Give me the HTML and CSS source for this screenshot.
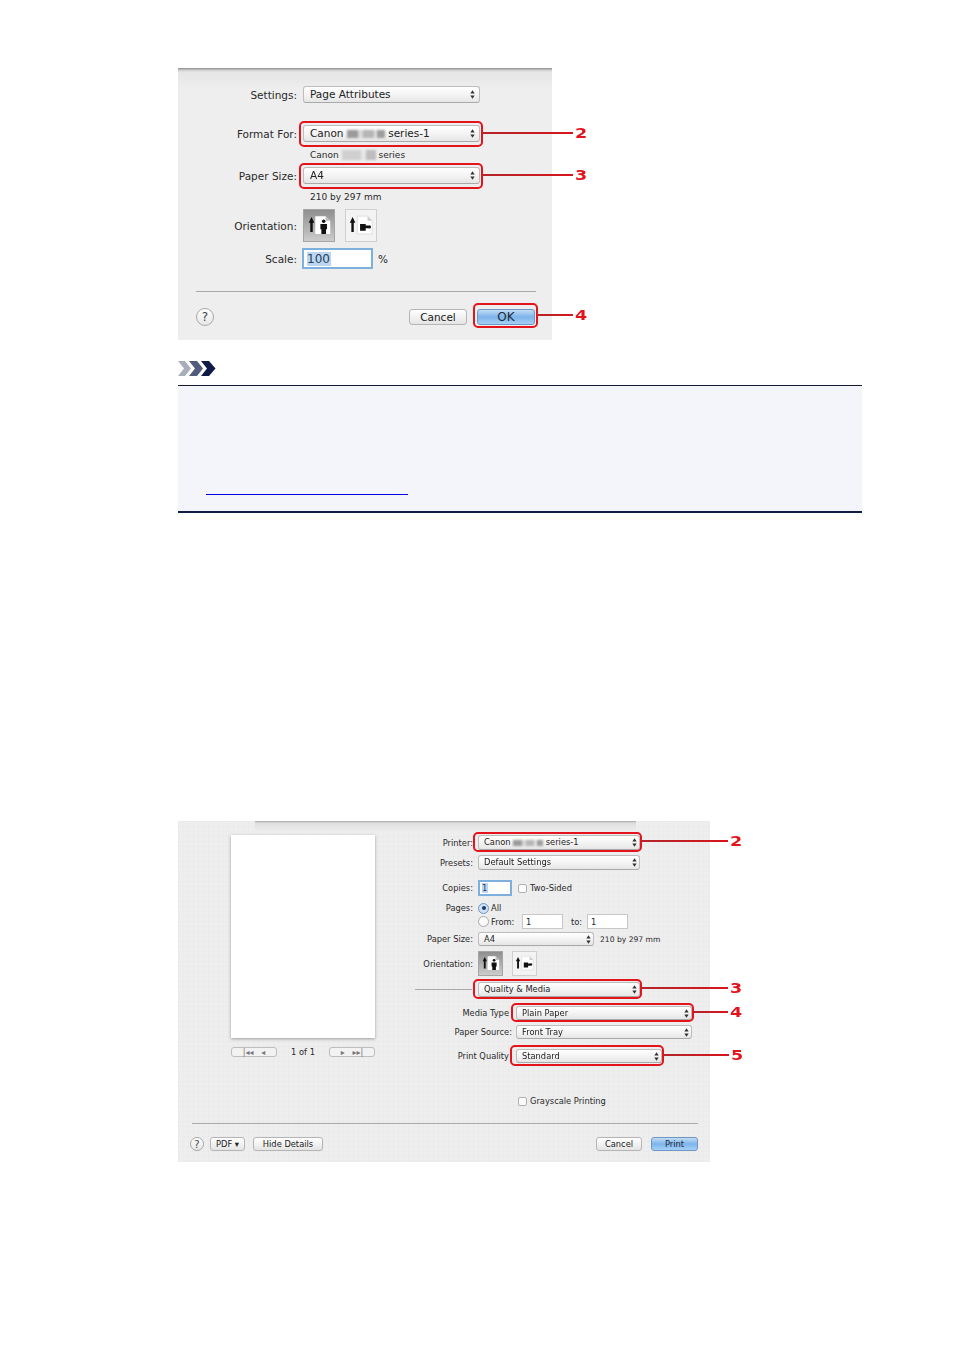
FILE: index.html
```html
<!DOCTYPE html>
<html>
<head>
    <meta name="viewport" content="width=device-width initial-scale=1.0">
    <title>Page Attributes and Print dialogs</title>
    <link rel="stylesheet" href="styles.css">
</head>
<body>
    <svg class="defs" width="0" height="0">
        <symbol id="updown" viewBox="0 0 6 10">
            <path d="M3 0 5.6 3.8H.4zM3 10 .4 6.2h5.2z" fill="#333"/>
        </symbol>
        <symbol id="portrait" viewBox="0 0 32 32">
            <path d="M8 7 11 13H9.300V23H6.700V13H5z" fill="#111"/>
            <path d="M12 6H23L28 11V25H12z" fill="#fff"/>
            <path d="M23 6V11H28z" fill="#bbb"/>
            <circle cx="21" cy="11.500" r="1.900" fill="#111"/>
            <path d="M17.500 14.500H24.500V20H23.500V25H18.500V20H17.500z" fill="#111"/>
        </symbol>
        <symbol id="landscape" viewBox="0 0 32 32">
            <path d="M7 7 10 13H8.300V23H5.700V13H4z" fill="#111"/>
            <path d="M12 6H23L28 11V25H12z" fill="#fff" stroke="#ccc" stroke-width=".6"/>
            <path d="M23 6V11H28z" fill="#ccc"/>
            <path d="M15 14.500H21V16H24V19H21V21.500H15z" fill="#111"/>
            <circle cx="25" cy="17.500" r="1.700" fill="#111"/>
        </symbol>
    </svg>

    <div class="page">
        <div class="dialog dialog_a">
            <div class="row_a settings_row">
                <span class="label_a">Settings:</span>
                <div class="select select_a">Page Attributes<svg class="arrows"><use href="#updown"/></svg></div>
            </div>
            <div class="row_a format_row">
                <span class="label_a">Format For:</span>
                <div class="select select_a">Canon <span class="smudge"></span> series-1<svg class="arrows"><use href="#updown"/></svg>
                    <div class="mark mark_a"><div class="lead"><i class="line w90"></i><b class="num">2</b></div></div>
                </div>
            </div>
            <div class="row_a sub_row">
                <span class="label_a"></span>
                <span class="sub_text">Canon <span class="smudge smudge_sm"></span> series</span>
            </div>
            <div class="row_a paper_row">
                <span class="label_a">Paper Size:</span>
                <div class="select select_a">A4<svg class="arrows"><use href="#updown"/></svg>
                    <div class="mark mark_a"><div class="lead"><i class="line w90"></i><b class="num">3</b></div></div>
                </div>
            </div>
            <div class="row_a sub_row">
                <span class="label_a"></span>
                <span class="sub_text">210 by 297 mm</span>
            </div>
            <div class="row_a orient_row">
                <span class="label_a">Orientation:</span>
                <div class="orient orient_a pressed"><svg><use href="#portrait"/></svg></div>
                <div class="orient orient_a"><svg><use href="#landscape"/></svg></div>
            </div>
            <div class="row_a scale_row">
                <span class="label_a">Scale:</span>
                <div class="field field_a"><span class="sel">100</span></div>
                <span class="percent">%</span>
            </div>
            <div class="rule rule_a"></div>
            <div class="footer_a">
                <div class="help">?</div>
                <div class="btn cancel_a">Cancel</div>
                <div class="btn blue ok_a">OK
                    <div class="mark mark_ok"><div class="lead"><i class="line w35"></i><b class="num">4</b></div></div>
                </div>
            </div>
        </div>

        <div class="note">
            <svg class="note_icon" viewBox="0 0 38 15">
                <path d="M0 0H7L13 7.500 7 15H0L6 7.500z" fill="#a9aebb"/>
                <path d="M11 0H19L25 7.500 19 15H11L17 7.500z" fill="#525c7c"/>
                <path d="M23 0H31L37.500 7.500 31 15H23L29 7.500z" fill="#101c47"/>
            </svg>
            <div class="note_body">
                <a class="note_link" href="#"></a>
            </div>
        </div>

        <div class="dialog dialog_b">
            <div class="sheet_edge"></div>
            <div class="main_b">
                <div class="preview">
                    <div class="paper"></div>
                    <div class="pager">
                        <div class="pager_btn">|◂◂&nbsp;&nbsp;&nbsp;◂</div>
                        <span>1 of 1</span>
                        <div class="pager_btn">▸&nbsp;&nbsp;&nbsp;▸▸|</div>
                    </div>
                </div>
                <div class="options">
                    <div class="row_b printer_row">
                        <span class="label_b">Printer:</span>
                        <div class="select select_b">Canon <span class="smudge smudge_b"></span> series-1<svg class="arrows"><use href="#updown"/></svg>
                            <div class="mark mark_b"><div class="lead"><i class="line w86"></i><b class="num">2</b></div></div>
                        </div>
                    </div>
                    <div class="row_b presets_row">
                        <span class="label_b">Presets:</span>
                        <div class="select select_b">Default Settings<svg class="arrows"><use href="#updown"/></svg></div>
                    </div>
                    <div class="row_b copies_row">
                        <span class="label_b">Copies:</span>
                        <div class="field field_b"><span class="sel">1</span></div>
                        <span class="check"></span>
                        <span>Two-Sided</span>
                    </div>
                    <div class="row_b pages_row">
                        <span class="label_b">Pages:</span>
                        <span class="radio on"></span>
                        <span>All</span>
                    </div>
                    <div class="row_b from_row">
                        <span class="label_b"></span>
                        <span class="radio"></span>
                        <span class="from_text">From:</span>
                        <div class="field field_c">1</div>
                        <span class="to_text">to:</span>
                        <div class="field field_c">1</div>
                    </div>
                    <div class="row_b size_row">
                        <span class="label_b">Paper Size:</span>
                        <div class="select select_size">A4<svg class="arrows"><use href="#updown"/></svg></div>
                        <span class="size_text">210 by 297 mm</span>
                    </div>
                    <div class="row_b orient_row_b">
                        <span class="label_b">Orientation:</span>
                        <div class="orient orient_b pressed"><svg><use href="#portrait"/></svg></div>
                        <div class="orient orient_b"><svg><use href="#landscape"/></svg></div>
                    </div>
                    <div class="row_b quality_row">
                        <span class="label_b"><i class="divider"></i></span>
                        <div class="select select_b">Quality &amp; Media<svg class="arrows"><use href="#updown"/></svg>
                            <div class="mark mark_b"><div class="lead"><i class="line w86"></i><b class="num">3</b></div></div>
                        </div>
                    </div>
                    <div class="row_b media_row">
                        <span class="label_m">Media Type</span>
                        <div class="select select_m">Plain Paper<svg class="arrows"><use href="#updown"/></svg>
                            <div class="mark mark_b"><div class="lead"><i class="line w34"></i><b class="num">4</b></div></div>
                        </div>
                    </div>
                    <div class="row_b source_row">
                        <span class="label_m label_src">Paper Source:</span>
                        <div class="select select_m">Front Tray<svg class="arrows"><use href="#updown"/></svg></div>
                    </div>
                    <div class="row_b pq_row">
                        <span class="label_m">Print Quality</span>
                        <div class="select select_pq">Standard<svg class="arrows"><use href="#updown"/></svg>
                            <div class="mark mark_pq"><div class="lead"><i class="line w65"></i><b class="num">5</b></div></div>
                        </div>
                    </div>
                    <div class="row_b gray_row">
                        <span class="check"></span>
                        <span>Grayscale Printing</span>
                    </div>
                </div>
            </div>
            <div class="rule rule_b"></div>
            <div class="footer_b">
                <div class="help help_b">?</div>
                <div class="btn pdf">PDF ▾</div>
                <div class="btn hide">Hide Details</div>
                <div class="btn cancel_b">Cancel</div>
                <div class="btn blue print">Print</div>
            </div>
        </div>
    </div>
</body>
</html>
```

FILE: styles.css
```css
* {
    box-sizing: border-box;
    font-family: "DejaVu Sans", sans-serif;
}
body {
    margin: 0;
    background: #fff;
    color: #2a2a2a;
}
i {
    display: block;
}
.defs {
    position: absolute;
}
.page {
    padding: 68px 0 0 178px;
}

/* shared dialog parts */
.dialog {
    position: relative;
    filter: blur(0.6px);
    background-color: #eeeeee;
    background-image:
        repeating-linear-gradient(0deg, rgba(0,0,0,0.012) 0 1px, transparent 1px 5px),
        repeating-linear-gradient(90deg, rgba(0,0,0,0.012) 0 1px, transparent 1px 5px);
}
.select {
    position: relative;
    white-space: nowrap;
    border: 1px solid #bdbdbd;
    border-bottom-color: #a9a9a9;
    border-radius: 3px;
    background: linear-gradient(#ffffff, #f4f4f4 50%, #e6e6e6);
    color: #222;
}
.arrows {
    position: absolute;
    right: 4px;
    top: 50%;
    width: 5px;
    height: 9px;
    margin-top: -4.5px;
}
.smudge {
    display: inline-block;
    vertical-align: middle;
    width: 38px;
    height: 8px;
    filter: blur(1px);
    background: linear-gradient(90deg, #9a9a9a 0 30%, #d8d8d8 30% 42%, #b5b5b5 42% 70%, #e0e0e0 70% 80%, #9d9d9d 80%);
}
.smudge_sm {
    width: 34px;
    height: 10px;
    background: linear-gradient(90deg, #cfcfcf 0 55%, #e6e6e6 55% 70%, #bdbdbd 70%);
}
.smudge_b {
    width: 30px;
    height: 6px;
}
.mark {
    position: absolute;
    border: 2px solid #e4141c;
    border-radius: 5px;
}
.mark_a {
    inset: -5px -4px -6px -5px;
}
.mark_ok {
    inset: -7px -4px -4px -5px;
}
.mark_b {
    inset: -4px -3px -3px -6px;
}
.mark_pq {
    inset: -5px -3px -4px -7px;
}
.lead {
    position: absolute;
    left: 100%;
    top: calc(50% - 1px);
    display: flex;
    align-items: center;
    margin-left: 2px;
    transform: translateY(-50%);
}
.line {
    height: 2px;
    background: linear-gradient(90deg, #b3252a, #d9141c);
}
.w90 { width: 90px; }
.w86 { width: 86px; }
.w65 { width: 65px; }
.w35 { width: 35px; }
.w34 { width: 34px; }
.num {
    margin-left: 2px;
    font-size: 14px;
    font-weight: bold;
    line-height: 14px;
    color: #e4141c;
    transform: scaleX(1.25);
    transform-origin: left center;
}
.btn {
    position: relative;
    display: flex;
    align-items: center;
    justify-content: center;
    border: 1px solid #b5b5b5;
    border-radius: 3px;
    background: linear-gradient(#ffffff, #f2f2f2 50%, #e4e4e4);
    color: #222;
}
.blue {
    border-color: #6f97c4;
    background: linear-gradient(#c2dcf5, #7db4ea 50%, #a5d0f6);
    color: #1c2a3a;
}
.help {
    display: flex;
    align-items: center;
    justify-content: center;
    width: 18px;
    height: 18px;
    border: 1px solid #a8a8a8;
    border-radius: 50%;
    background: linear-gradient(#ffffff, #e6e6e6);
    font-size: 12px;
    color: #444;
}
.orient {
    display: flex;
    border: 1px solid #cfcfcf;
    background: #f3f3f3;
}
.orient svg {
    width: 100%;
    height: 100%;
}
.orient.pressed {
    border-color: #a5a5a5;
    background: linear-gradient(#8f8f8f, #b9b9b9 70%, #cccccc);
}
.field {
    display: flex;
    align-items: center;
    background: #fff;
    border: 1px solid #c8c8c8;
}
.sel {
    padding-right: 1px;
    background: #bcd6f0;
    color: #24405f;
}
.rule {
    height: 1px;
    background: #a9a9a9;
}

/* page attributes dialog */
.dialog_a {
    width: 374px;
    height: 272px;
    padding-top: 18px;
    font-size: 10.5px;
    background-image:
        linear-gradient(#8a8a8a, #c9c9c9 2px, #e6e6e6 4px, #eeeeee 22px);
}
.row_a {
    display: flex;
    align-items: center;
    height: 17px;
}
.label_a {
    flex: none;
    width: 119px;
    margin-right: 6px;
    text-align: right;
}
.select_a {
    width: 177px;
    height: 17px;
    padding-left: 6px;
    line-height: 15px;
}
.format_row {
    margin-top: 22px;
}
.sub_row {
    height: 12px;
    margin-top: 7px;
}
.paper_row {
    margin-top: 6px;
}
.sub_text {
    padding-left: 7px;
    font-size: 9px;
    white-space: nowrap;
}
.orient_row {
    height: 33px;
    margin-top: 6px;
}
.orient_a {
    width: 32px;
    height: 33px;
    margin-right: 10px;
}
.scale_row {
    height: 21px;
    margin-top: 6px;
}
.field_a {
    width: 71px;
    height: 21px;
    margin-left: -1px;
    padding-left: 3px;
    border: 2px solid #7eb0de;
    font-size: 12px;
}
.percent {
    margin-left: 5px;
}
.rule_a {
    width: 340px;
    margin: 22px 0 0 18px;
}
.footer_a {
    display: flex;
    align-items: center;
    height: 16px;
    margin-top: 17px;
    padding-left: 18px;
}
.cancel_a {
    width: 58px;
    height: 16px;
    margin-left: 195px;
}
.ok_a {
    width: 58px;
    height: 16px;
    margin-left: 10px;
    font-size: 12px;
}

/* note box */
.note {
    margin-top: 21px;
    width: 684px;
}
.note_icon {
    display: block;
    width: 38px;
    height: 15px;
}
.note_body {
    height: 128px;
    margin-top: 9px;
    padding: 107px 0 0 28px;
    border-top: 1px solid #14193a;
    border-bottom: 2px solid #101c47;
    background: #f3f5fa;
}
.note_link {
    display: block;
    width: 202px;
    height: 2px;
    border-bottom: 1px solid #0000e0;
}

/* print dialog */
.dialog_b {
    width: 532px;
    height: 341px;
    margin-top: 308px;
    font-size: 8.3px;
}
.dialog_b .arrows {
    right: 2px;
}
.sheet_edge {
    position: absolute;
    left: 77px;
    top: 0;
    width: 381px;
    height: 11px;
    background: linear-gradient(#a8a8a8, #dedede 2px, #e8e8e8 8px, #eeeeee);
}
.main_b {
    display: flex;
    height: 302px;
}
.preview {
    flex: none;
    width: 144px;
    margin-left: 53px;
    padding-top: 14px;
}
.paper {
    height: 203px;
    background: #fff;
    box-shadow: 0 1px 3px rgba(0,0,0,0.35);
}
.pager {
    display: flex;
    align-items: center;
    justify-content: space-between;
    height: 10px;
    margin-top: 9px;
}
.pager_btn {
    display: flex;
    align-items: center;
    justify-content: center;
    width: 46px;
    height: 10px;
    border: 1px solid #bdbdbd;
    border-radius: 3px;
    background: #f2f2f2;
    font-size: 8px;
    color: #777;
}
.options {
    flex: none;
    width: 335px;
    padding-top: 14px;
}
.row_b {
    display: flex;
    align-items: center;
    height: 15px;
    white-space: nowrap;
}
.label_b {
    flex: none;
    width: 98px;
    margin-right: 5px;
    text-align: right;
}
.label_m {
    flex: none;
    width: 134px;
    margin-right: 3px;
    text-align: right;
}
.label_src {
    width: 137px;
    margin-right: 0;
}
.select_b {
    width: 162px;
    height: 15px;
    padding-left: 5px;
    line-height: 13px;
}
.select_size {
    width: 116px;
    height: 14px;
    padding-left: 5px;
    line-height: 12px;
}
.select_m {
    width: 176px;
    height: 14px;
    margin-left: 4px;
    padding-left: 5px;
    line-height: 12px;
}
.select_pq {
    width: 146px;
    height: 14px;
    margin-left: 4px;
    padding-left: 5px;
    line-height: 12px;
}
.presets_row {
    margin-top: 5px;
}
.copies_row {
    height: 16px;
    margin-top: 10px;
}
.field_b {
    width: 34px;
    height: 16px;
    padding-left: 2px;
    border: 2px solid #7eb0de;
}
.check {
    flex: none;
    width: 9px;
    height: 9px;
    margin: 0 3px 0 6px;
    border: 1px solid #b0b0b0;
    border-radius: 2px;
    background: #fbfbfb;
}
.pages_row {
    height: 12px;
    margin-top: 6px;
}
.radio {
    flex: none;
    position: relative;
    width: 11px;
    height: 11px;
    margin-right: 2px;
    border: 1px solid #a9a9a9;
    border-radius: 50%;
    background: #fafafa;
}
.radio.on {
    border-color: #6f97c4;
    background: #cfe2f5;
}
.radio.on::after {
    content: "";
    position: absolute;
    left: 2.500px;
    top: 2.500px;
    width: 4px;
    height: 4px;
    border-radius: 50%;
    background: #1c3a66;
}
.from_text {
    width: 31px;
}
.field_c {
    width: 41px;
    height: 15px;
    padding-left: 3px;
}
.to_text {
    width: 24px;
    padding-left: 8px;
}
.size_row {
    height: 14px;
    margin-top: 3px;
}
.size_text {
    margin-left: 6px;
    font-size: 7.6px;
}
.orient_row_b {
    height: 25px;
    margin-top: 5px;
}
.orient_b {
    width: 25px;
    height: 25px;
    margin-right: 9px;
}
.quality_row {
    margin-top: 6px;
}
.divider {
    width: 57px;
    height: 1px;
    margin-left: 40px;
    background: #a9a9a9;
}
.media_row {
    height: 14px;
    margin-top: 9px;
}
.source_row {
    height: 14px;
    margin-top: 5px;
}
.pq_row {
    height: 14px;
    margin-top: 10px;
}
.gray_row {
    height: 12px;
    margin-top: 32px;
    padding-left: 137px;
}
.rule_b {
    width: 506px;
    margin-left: 14px;
}
.footer_b {
    display: flex;
    align-items: center;
    height: 14px;
    margin-top: 13px;
    padding-left: 12px;
}
.help_b {
    width: 14px;
    height: 14px;
    font-size: 10px;
}
.pdf {
    width: 35px;
    height: 14px;
    margin-left: 6px;
}
.hide {
    width: 70px;
    height: 14px;
    margin-left: 8px;
}
.cancel_b {
    width: 46px;
    height: 14px;
    margin-left: 273px;
}
.print {
    width: 47px;
    height: 14px;
    margin-left: 9px;
}
```
